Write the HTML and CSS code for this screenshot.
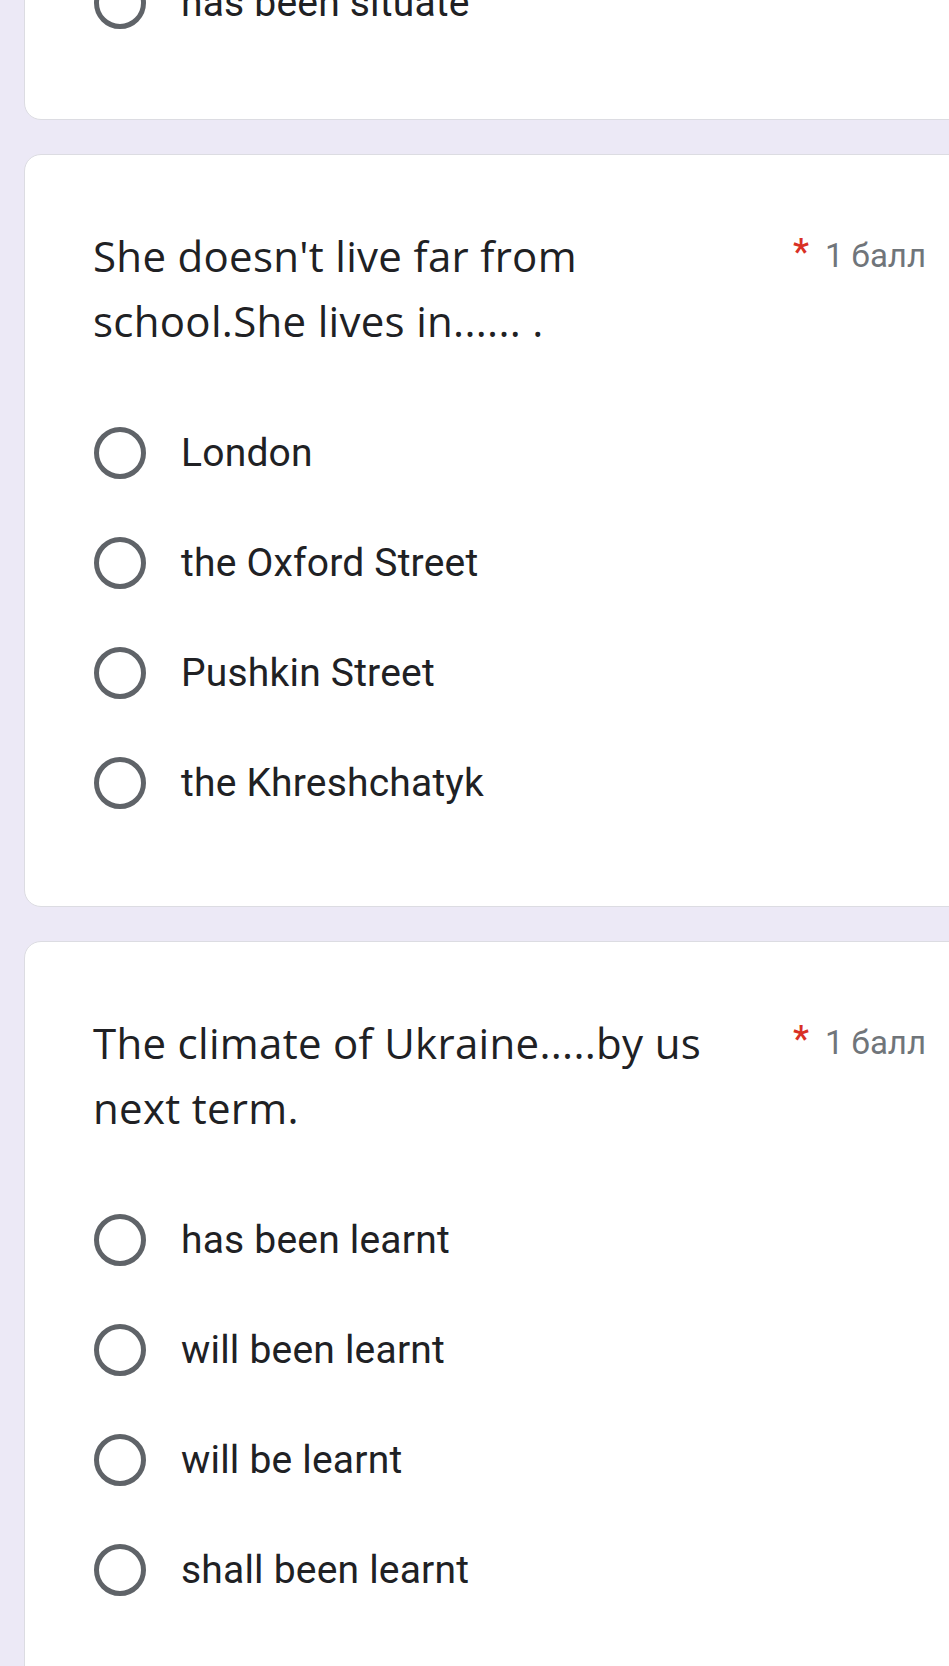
FILE: index.html
```html
<!DOCTYPE html>
<html lang="ru">
<head>
<meta charset="utf-8">
<title>Form</title>
<link rel="stylesheet" href="styles.css">
</head>
<body>
<div class="page">
  <div class="card card-partial">
    <div class="options">
      <div class="option"><span class="radio"></span><span class="label">has been situate</span></div>
    </div>
  </div>

  <div class="card">
    <div class="head">
      <div class="title">She doesn't live far from school.She lives in...... .</div>
      <div class="meta"><span class="req">*</span><span class="points">1 балл</span></div>
    </div>
    <div class="options">
      <div class="option"><span class="radio"></span><span class="label">London</span></div>
      <div class="option"><span class="radio"></span><span class="label">the Oxford Street</span></div>
      <div class="option"><span class="radio"></span><span class="label">Pushkin Street</span></div>
      <div class="option"><span class="radio"></span><span class="label">the Khreshchatyk</span></div>
    </div>
  </div>

  <div class="card">
    <div class="head">
      <div class="title">The climate of Ukraine.....by us next term.</div>
      <div class="meta"><span class="req">*</span><span class="points">1 балл</span></div>
    </div>
    <div class="options">
      <div class="option"><span class="radio"></span><span class="label">has been learnt</span></div>
      <div class="option"><span class="radio"></span><span class="label">will been learnt</span></div>
      <div class="option"><span class="radio"></span><span class="label">will be learnt</span></div>
      <div class="option"><span class="radio"></span><span class="label">shall been learnt</span></div>
    </div>
  </div>
</div>
</body>
</html>
```

FILE: styles.css
```css
html, body {
  margin: 0;
  padding: 0;
}

body {
  background: #ece9f6;
  overflow: hidden;
  font-family: Roboto, "Liberation Sans", sans-serif;
  color: #202124;
}

.page {
  margin-top: -53px;
  display: flex;
  flex-direction: column;
  gap: 34px;
}

.card {
  background: #ffffff;
  border: 1px solid #dcdce2;
  border-radius: 17px;
  margin: 0 -40px 0 24px;
  padding: 68px 62px 68px 68px;
}

.card-partial {
  padding-top: 0;
  padding-bottom: 61px;
}

.head {
  display: flex;
  align-items: flex-start;
  margin-bottom: 45px;
}

.title {
  flex: 1;
  max-width: 650px;
  font-family: "Open Sans", "Noto Sans", sans-serif;
  font-size: 42px;
  letter-spacing: 0.3px;
  line-height: 65px;
  color: #202124;
}

.meta {
  margin-left: auto;
  display: flex;
  align-items: center;
  height: 65px;
  font-size: 33px;
}

.req {
  color: #d93025;
  margin-right: 16px;
  font-size: 36px;
  font-weight: 500;
  align-self: flex-start;
  padding-top: 8px;
}

.points {
  color: #70757a;
}

.options {
  display: flex;
  flex-direction: column;
}

.option {
  height: 110px;
  display: flex;
  align-items: center;
}

.radio {
  width: 52px;
  height: 52px;
  box-sizing: border-box;
  border: 5px solid #5f6368;
  border-radius: 50%;
  flex: none;
  margin-left: 1px;
}

.label {
  margin-left: 35px;
  font-size: 39px;
  letter-spacing: 0.2px;
  color: #202124;
}
```
